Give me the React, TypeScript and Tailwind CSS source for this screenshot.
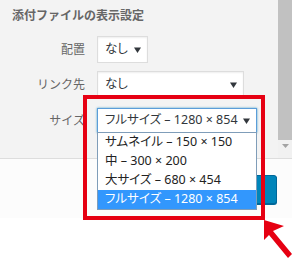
import React from "react";

const FONT = "font-['Noto_Sans','Noto_Sans_CJK_JP',sans-serif]";
const PALT = "[font-feature-settings:'palt']";

const SIZE_OPTIONS = [
  { label: "サムネイル", dims: "150 × 150" },
  { label: "中", dims: "300 × 200" },
  { label: "大サイズ", dims: "680 × 454" },
  { label: "フルサイズ", dims: "1280 × 854" },
];

function Caret() {
  return (
    <svg width="7" height="6" viewBox="0 0 7 6" className="shrink-0">
      <path d="M0 0.5h7L3.5 6z" fill="#32373c" />
    </svg>
  );
}

function FakeSelect({
  value,
  className,
  focused = false,
}: {
  value: string;
  className: string;
  focused?: boolean;
}) {
  return (
    <div
      className={`flex items-center justify-between bg-white pl-[7px] pr-[6px] text-[12.5px] text-[#32373c] ${PALT} ${
        focused
          ? "border border-[#5b9dd9] shadow-[0_0_2px_rgba(30,140,190,0.8)]"
          : "border border-[#dddddd] shadow-[inset_0_1px_2px_rgba(0,0,0,0.07)]"
      } ${className}`}
    >
      <span className="whitespace-nowrap leading-none">{value}</span>
      <Caret />
    </div>
  );
}

function FormRow({ label, children }: { label: string; children: React.ReactNode }) {
  return (
    <div className="flex items-center">
      <span className="w-[85px] shrink-0 text-right text-[12px] text-[#666666]">{label}</span>
      <div className="ml-[12px]">{children}</div>
    </div>
  );
}

export default function App() {
  return (
    <div className={`relative h-[258px] w-[292px] overflow-hidden bg-white ${FONT}`}>
      {/* Settings panel + scrollbar */}
      <div className="flex h-[159px] border-b border-[#dddddd]">
        <div className="flex-1 bg-[#f3f3f3]">
          <h2 className="pl-[12px] pt-[8px] text-[12px] font-bold leading-[16px] text-[#666666]">
            添付ファイルの表示設定
          </h2>
          <div className="mt-[12px] flex flex-col">
            <FormRow label="配置">
              <FakeSelect value="なし" className="h-[27px] w-[51px]" />
            </FormRow>
            <div className="mt-[8px]">
              <FormRow label="リンク先">
                <FakeSelect value="なし" className="h-[27px] w-[147px]" />
              </FormRow>
            </div>
            <div className="mt-[10px]">
              <FormRow label="サイズ">
                <FakeSelect
                  value="フルサイズ – 1280 × 854"
                  className="h-[25px] w-[160px]"
                  focused
                />
              </FormRow>
            </div>
          </div>
        </div>
        {/* scrollbar */}
        <div className="flex w-[14px] flex-col bg-[#f1f1f1]">
          <div className="h-[140px] bg-[#c1c1c1]" />
          <div className="flex flex-1 items-center justify-center pb-[6px]">
            <svg width="7" height="4" viewBox="0 0 7 4">
              <path d="M0 0h7L3.5 4z" fill="#a3a3a3" />
            </svg>
          </div>
        </div>
      </div>

      {/* Footer toolbar */}
      <div className="flex h-[59px] items-start justify-end bg-[#fcfcfc] pr-[15px] pt-[16px]">
        <button className="h-[29px] w-[30px] rounded-[3px] border border-[#006799] bg-[#0085ba] shadow-[0_1px_0_#006799]" />
      </div>

      {/* Open dropdown list */}
      <div className={`absolute left-[97px] top-[132px] w-[160px] border border-[#7f9db9] bg-white text-[12.5px] text-[#222222] ${PALT}`}>
        {SIZE_OPTIONS.map((opt, i) => (
          <div
            key={opt.label}
            className={`flex h-[19px] items-center whitespace-nowrap pl-[7px] leading-none ${
              i === SIZE_OPTIONS.length - 1 ? "bg-[#3297fd] text-white" : ""
            }`}
          >
            {opt.label} – {opt.dims}
          </div>
        ))}
      </div>

      {/* Red highlight annotation */}
      <div className="pointer-events-none absolute left-[83px] top-[95px] h-[125px] w-[182px] border-[4px] border-[#e60012]" />

      {/* Red arrow */}
      <svg
        className="pointer-events-none absolute left-[255px] top-[214px]"
        width="37"
        height="44"
        viewBox="0 0 37 44"
      >
        <path d="M9 6 L9 26 L14 21 L33 44 L37 40 L18 17 L29 12 Z" fill="#e60012" />
      </svg>
    </div>
  );
}
